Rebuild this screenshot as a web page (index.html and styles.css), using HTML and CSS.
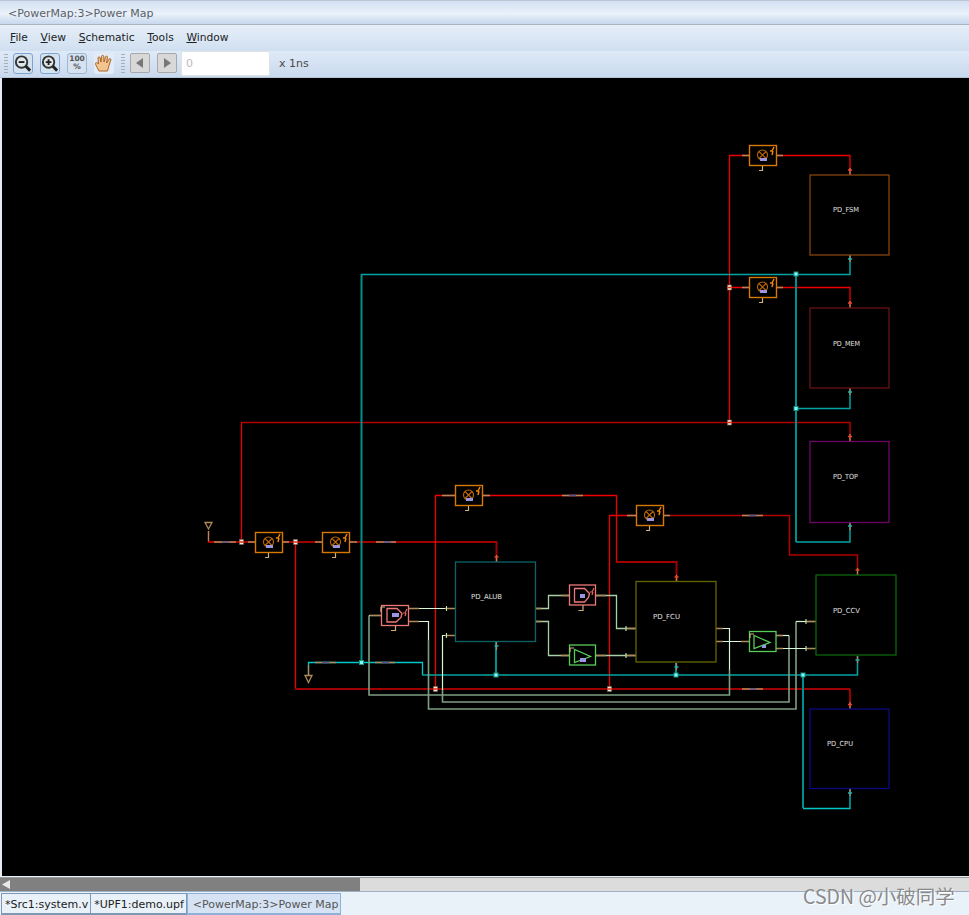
FILE: index.html
```html
<!DOCTYPE html>
<html lang="en">
<head>
<meta charset="utf-8">
<title>Power Map</title>
<link rel="stylesheet" href="styles.css">
</head>
<body>
<div class="app">
  <header class="titlebar">&lt;PowerMap:3&gt;Power Map</header>
  <nav class="menubar">
    <span class="menu"><u>F</u>ile</span>
    <span class="menu"><u>V</u>iew</span>
    <span class="menu"><u>S</u>chematic</span>
    <span class="menu"><u>T</u>ools</span>
    <span class="menu"><u>W</u>indow</span>
  </nav>
  <div class="toolbar">
    <span class="grip"></span>
    <button class="tool tool-on"><svg width="20" height="20" viewBox="0 0 20 20"><circle cx="8.500" cy="8.500" r="6" fill="#dfe8ea" stroke="#333" stroke-width="2"/><path d="M5.500 8.500h6" stroke="#222" stroke-width="2"/><path d="M13 13l4.500 4.500" stroke="#222" stroke-width="3"/></svg></button>
    <button class="tool tool-on"><svg width="20" height="20" viewBox="0 0 20 20"><circle cx="8.500" cy="8.500" r="6" fill="#dfe8ea" stroke="#333" stroke-width="2"/><path d="M5.500 8.500h6M8.500 5.500v6" stroke="#222" stroke-width="2"/><path d="M13 13l4.500 4.500" stroke="#222" stroke-width="3"/></svg></button>
    <button class="tool tool-pct"><span>100</span><span>%</span></button>
    <button class="tool tool-hand"><svg width="20" height="20" viewBox="0 0 20 20"><path d="M5 18C3 14 1.500 12 1.500 10.500S3.500 9.500 4.500 11L4 5c0-1.500 2-1.500 2.200 0L7 9 7.500 3.500c.2-1.500 2.200-1.500 2.300 0L10 9l1.500-5c.4-1.400 2.200-1 2 .4L12.700 10l2.300-3.800c.8-1.200 2.300-.4 1.800.8L15 12.500 13.500 18z" fill="#f3c48e" stroke="#a5662b" stroke-width="1"/></svg></button>
    <span class="grip grip-wide"></span>
    <button class="nav"><svg width="10" height="12" viewBox="0 0 10 12"><path d="M8 1v10L1 6z" fill="#777"/></svg></button>
    <button class="nav"><svg width="10" height="12" viewBox="0 0 10 12"><path d="M2 1v10l7-5z" fill="#777"/></svg></button>
    <input class="timebox" value="0" readonly>
    <span class="unit">x 1ns</span>
  </div>
  <main class="canvas">
    <svg class="schematic" width="967" height="798" viewBox="2 78 967 798">
      <defs>
        <g id="sw">
          <path class="stub" d="M13.500 20v5.500h-3.500"/>
          <rect class="sw-box" x=".5" y=".5" width="27" height="20"/>
          <circle class="sw-ring" cx="13.500" cy="10" r="5"/>
          <path class="sw-ring" d="M10 6.500l7 7M17 6.500l-7 7"/>
          <path class="sw-bolt" d="M25 2l-2 4h-2M24 6l-1 4"/>
          <rect class="tag" x="11" y="13" width="7" height="3"/>
        </g>
      </defs>

      <!-- red supply nets -->
      <path class="w r1" d="M208.500 531V542H216M283 542H289M241.500 542V423"/>
      <path class="w r2" d="M216 542H255M289 542H322M349 542H496.500V562"/>
      <path class="w r3" d="M241 422.500H850V441"/>
      <path class="w r1" d="M295.500 542V689"/>
      <path class="w r2" d="M295 689H850"/>
      <path class="w r1" d="M850 689V709"/>
      <path class="w r1" d="M729.500 422V155.500H749M776 155.500H850V175"/>
      <path class="w r1" d="M729.500 287.500H749M776 287.500H850V308"/>
      <path class="w r1" d="M435.500 689V495.500H455M482 495.500H616.500V562"/>
      <path class="w r2" d="M616 562H676.500V582"/>
      <path class="w r1" d="M609.500 689V515.500H636"/>
      <path class="w r3" d="M663 515.500H789.500V555"/>
      <path class="w r3" d="M789 555H857.500V575"/>

      <!-- cyan ground nets -->
      <path class="w c1" d="M308.500 675V662.500H422.500V675"/>
      <path class="w c3" d="M422 675H857.500V656"/>
      <path class="w c2" d="M361.500 662V274.500"/>
      <path class="w c3" d="M361 274.500H850V255"/>
      <path class="w c2" d="M796 274V542"/>
      <path class="w c3" d="M796 408.500H850V388"/>
      <path class="w c3" d="M796 542H850V523"/>
      <path class="w c2" d="M803 675V808"/>
      <path class="w c1" d="M803 808.500H850V789"/>
      <path class="w c2" d="M496 642V675M676 663V675"/>

      <!-- isolation control nets -->
      <path class="w l1" d="M409 608.500H455"/>
      <path class="w l1" d="M409 621.500H428.500V640"/>
      <path class="w l2" d="M428.500 640V709H796V621.500"/>
      <path class="w l1" d="M796 621.500H816"/>
      <path class="w l1" d="M381 615.500H369"/>
      <path class="w l2" d="M369 615.500V695H729.500V670"/>
      <path class="w l1" d="M729.500 670V628.500H716"/>
      <path class="w l2" d="M442.500 690V702H789V635.500"/>
      <path class="w l1" d="M789 635.500H776"/>
      <path class="w l1" d="M455 635.500H442.500V690"/>
      <path class="w l3" d="M535 608.500H548.500V595.500H569M596 595.500H616.500V628.500H636"/>
      <path class="w l3" d="M535 621.500H548.500V655.500H570M596 655.500H636"/>
      <path class="w l1" d="M716 641.500H749M776 648.500H816"/>

      <!-- tan/blue decoration on nets -->
      <path class="w tan" d="M214 542H236M283 542H289M349 542H357M376 542H396M562 495.500H583M742 515.500H763M742 689H763M315 662.500H336M375 662.500H395"/>
      <path class="w blu" d="M222 542H229M384 542H391M569 495.500H576M749 515.500H756M750 689H756M322 662.500H329M382 662.500H389"/>
      <path class="w tan" d="M208.500 531V541M308.500 665V675M496.500 555V562M496.500 642V650M676.500 575V582M676.500 663V670M850 168V175M850 255V262M850 301V308M850 388V395M850 434V441M850 523V530M857.500 568V575M857.500 656V663M850 702V709M850 789V796"/>
      <path class="w tan" d="M409 608.500H419M445 608.500H455M455 635.500H445M535 608.500H541M535 621.500H541M561 595.500H569M596 595.500H606M625 628.500H636M625 655.500H636M561 655.500H570M596 655.500H606M716 628.500H723M716 641.500H723M741 641.500H749M776 635.500H783M776 648.500H783M806 621.500H816M806 648.500H816M370 615.500H381M409 621.500H419"/>
      <path class="w tan" d="M248 542H255M322 542H315M442 495.500H455M482 495.500H490M627 515.500H636M663 515.500H670M742 155.500H749M776 155.500H783M742 287.500H749M776 287.500H783"/>

      <!-- pin ticks -->
      <path class="w pin-r" d="M494.500 557h4M674.500 577h4M848 170h4M848 303h4M848 436.500h4M855.500 570h4M848 704.500h4"/>
      <path class="w pin-c" d="M494.500 646h4M674.500 667h4M848 259h4M848 392h4M848 526h4M855.500 660h4M848 793h4"/>
      <path class="w pin-l" d="M446.500 606v5M446.500 633v5M626 626v5M626 653v5M806 619v5M806 646v5"/>

      <!-- antenna and ground markers -->
      <path class="mark" d="M205 522.500h7l-3.500 6.500z"/>
      <path class="mark" d="M305 675.500h7l-3.500 7z"/>

      <!-- power domains -->
      <rect class="pd pd-fsm" x="810" y="175" width="79" height="80"/>
      <rect class="pd pd-mem" x="810" y="308" width="79" height="80"/>
      <rect class="pd pd-top" x="810" y="441.500" width="79" height="81"/>
      <rect class="pd pd-alu" x="455.500" y="562" width="80" height="79.500"/>
      <rect class="pd pd-fcu" x="636" y="581.500" width="80" height="80.500"/>
      <rect class="pd pd-ccv" x="816" y="575" width="80" height="80"/>
      <rect class="pd pd-cpu" x="810" y="709" width="79" height="79.500"/>
      <text class="lbl" x="833" y="212" textLength="26" lengthAdjust="spacingAndGlyphs">PD_FSM</text>
      <text class="lbl" x="833" y="346" textLength="27" lengthAdjust="spacingAndGlyphs">PD_MEM</text>
      <text class="lbl" x="833" y="479" textLength="25" lengthAdjust="spacingAndGlyphs">PD_TOP</text>
      <text class="lbl" x="471" y="599" textLength="31" lengthAdjust="spacingAndGlyphs">PD_ALUB</text>
      <text class="lbl" x="653" y="619" textLength="27" lengthAdjust="spacingAndGlyphs">PD_FCU</text>
      <text class="lbl" x="833" y="613" textLength="27" lengthAdjust="spacingAndGlyphs">PD_CCV</text>
      <text class="lbl" x="827" y="746" textLength="26" lengthAdjust="spacingAndGlyphs">PD_CPU</text>

      <!-- power switches -->
      <use href="#sw" x="255" y="532"/>
      <use href="#sw" x="322" y="532"/>
      <use href="#sw" x="455" y="485"/>
      <use href="#sw" x="636" y="505"/>
      <use href="#sw" x="749" y="145"/>
      <use href="#sw" x="749" y="277"/>

      <!-- isolation cells -->
      <path class="stub" d="M395.500 625v5.500h-4.500"/>
      <rect class="iso" x="381.500" y="605.500" width="27" height="20"/>
      <path class="iso" d="M387 608.500h10l5 5-1 4-5 4.500h-9z"/>
      <path class="stub" d="M381 607v5M385 607h-4"/>
      <path class="sw-bolt-iso" d="M407 609l-2 4h-2M406 613l-1 3"/>
      <rect class="tag" x="392" y="613" width="7" height="4"/>
      <path class="stub" d="M583 605v5.500h-4.500"/>
      <rect class="iso" x="569.500" y="585" width="26" height="20"/>
      <path class="iso" d="M574.500 588.500h10l5 5-1 4-4 4.500h-10z"/>
      <path class="sw-bolt-iso" d="M594 588l-2 4h-2M593 592l-1 3"/>
      <rect class="tag" x="580" y="594" width="5" height="4"/>

      <!-- level shifters -->
      <rect class="buf" x="569.500" y="645" width="26" height="20"/>
      <path class="buf" d="M574.500 649.500v13l16-6z"/>
      <path class="stub" d="M570 648h4M570 648v4"/>
      <rect class="tag" x="580" y="658" width="6" height="4"/>
      <rect class="buf" x="749.500" y="631.500" width="26.500" height="20"/>
      <path class="buf" d="M754 635.500v13l16-6z"/>
      <path class="stub" d="M750 634h4M750 634v4"/>
      <rect class="tag" x="762" y="645" width="4" height="3"/>

      <!-- junction dots -->
      <g class="dot-c">
        <rect x="359.500" y="660.500" width="4" height="4"/><rect x="794" y="272" width="4" height="4"/>
        <rect x="794" y="406.500" width="4" height="4"/><rect x="494" y="673" width="4" height="4"/>
        <rect x="674" y="673" width="4" height="4"/><rect x="801" y="673" width="4" height="4"/>
      </g>
      <g class="dot-r">
        <rect x="239.500" y="539.500" width="4" height="5"/><rect x="293.500" y="539.500" width="4" height="5"/>
        <rect x="727.500" y="420" width="4" height="5"/><rect x="727.500" y="285" width="4" height="5"/>
        <rect x="433.500" y="686.500" width="4" height="5"/><rect x="607.500" y="686.500" width="4" height="5"/>
      </g>
      <path class="dot-mid" d="M239.500 542h4M293.500 542h4M727.500 422.500h4M727.500 287.500h4M433.500 689h4M607.500 689h4"/>
    </svg>
  </main>
  <div class="hscroll">
    <span class="scroll-arrow"></span>
    <span class="scroll-thumb"></span>
    <span class="scroll-track"></span>
  </div>
  <footer class="tabs">
    <span class="tab">*Src1:system.v</span>
    <span class="tab">*UPF1:demo.upf</span>
    <span class="tab tab-active">&lt;PowerMap:3&gt;Power Map</span>
  </footer>
  <div class="watermark">CSDN @小破同学</div>
</div>
</body>
</html>
```

FILE: styles.css
```css
* { box-sizing: border-box; }
html, body { margin: 0; padding: 0; background: #e9f1f9; }
.app {
  position: relative;
  width: 969px;
  height: 915px;
  display: flex;
  flex-direction: column;
  overflow: hidden;
  font-family: "DejaVu Sans", sans-serif;
  font-size: 11px;
  color: #333;
}
.titlebar {
  height: 25px;
  flex: none;
  padding: 6px 0 0 8px;
  border-top: 1px solid #bcc6d2;
  border-bottom: 1px solid #aab2bc;
  background: linear-gradient(#d3e0f2, #eaf1fa 55%, #c8d8ee);
  color: #5a5f66;
  font-size: 11px;
  line-height: 13px;
}
.menubar {
  height: 26px;
  flex: none;
  display: flex;
  align-items: center;
  gap: 12.700px;
  padding: 0 0 2px 10px;
  background: linear-gradient(#e6eff9, #d0dff0);
  color: #222;
  font-size: 10.700px;
}
.menu u { text-decoration: underline; }
.toolbar {
  height: 27px;
  flex: none;
  display: flex;
  align-items: center;
  padding: 0 0 2px 4px;
  background: linear-gradient(#dfeaf7, #c9d9ee);
  border-bottom: 1px solid #b5c3d4;
}
.grip {
  width: 4px;
  height: 19px;
  margin-right: 5px;
  background: repeating-linear-gradient(#a6adb5 0 1px, transparent 1px 3px);
}
.grip-wide { margin-right: 5px; }
.tool {
  width: 20px;
  height: 21px;
  margin: 0 7px 0 0;
  padding: 0;
  display: flex;
  flex-direction: column;
  align-items: center;
  justify-content: center;
  border: 1px solid #9fb7d2;
  border-radius: 3px;
  background: #d5e2f0;
}
.tool-on { border-color: #7ea5cf; }
.tool-pct { font: bold 7.500px/8px "DejaVu Sans", sans-serif; color: #555; }
.tool-hand { border: 0; background: #e3ecf6; }
.nav {
  width: 20px;
  height: 20px;
  margin: 0 7px 0 0;
  padding: 0;
  display: flex;
  align-items: center;
  justify-content: center;
  border: 1px solid #a8a8a8;
  border-radius: 2px;
  background: #d8d8d8;
}
.timebox {
  width: 89px;
  height: 25px;
  margin-left: -3px;
  padding: 0 4px;
  border: 1px solid #dfe3e8;
  border-radius: 2px;
  background: #fff;
  color: #bbb;
  font: 11px "DejaVu Sans", sans-serif;
}
.unit { margin-left: 9px; font-size: 11px; color: #4a4a4a; }
.canvas {
  height: 798px;
  flex: none;
  padding-left: 2px;
  background: #e4ebf3;
}
.schematic { display: block; background: #000; }

.w { fill: none; }
.r1 { stroke: #ee0000; stroke-width: 1.300; }
.r2 { stroke: #a00000; stroke-width: 2; }
.r3 { stroke: #b40000; stroke-width: 1.500; }
.c1 { stroke: #00c8c8; stroke-width: 1.300; }
.c2 { stroke: #008f8f; stroke-width: 2; }
.c3 { stroke: #00a4a4; stroke-width: 1.500; }
.l1 { stroke: #d8f6d8; stroke-width: 1.200; }
.l2 { stroke: #7f9f82; stroke-width: 1.600; }
.l3 { stroke: #a8d0a8; stroke-width: 1.300; }
.tan { stroke: #b08a5c; stroke-width: 1.300; }
.blu { stroke: #55558f; stroke-width: 1.300; }
.pin-r { stroke: #f04020; stroke-width: 1.300; }
.pin-c { stroke: #20b0b8; stroke-width: 1.300; }
.pin-l { stroke: #c0e8b8; stroke-width: 1.100; }
.mark { fill: none; stroke: #b08a5c; stroke-width: 1.300; }

.pd { fill: #000; stroke-width: 1.300; }
.pd-fsm { stroke: #84440a; }
.pd-mem { stroke: #681212; }
.pd-top { stroke: #6e0668; }
.pd-alu { stroke: #0c6468; }
.pd-fcu { stroke: #666600; }
.pd-ccv { stroke: #0a680a; }
.pd-cpu { stroke: #0a0a80; }
.lbl {
  fill: #e0e0e0;
  font: 7px "DejaVu Sans", sans-serif;
}
.sw-box { fill: #000; stroke: #d87800; stroke-width: 1.400; }
.sw-ring { fill: none; stroke: #c06800; stroke-width: 1.100; }
.sw-bolt { fill: none; stroke: #f08400; stroke-width: 1.500; }
.sw-bolt-iso { fill: none; stroke: #f06060; stroke-width: 1.200; }
.stub { fill: none; stroke: #d0b080; stroke-width: 1.200; }
.tag { fill: #9a96e0; }
.iso { fill: none; stroke: #ee7878; stroke-width: 1.300; }
.buf { fill: none; stroke: #58cc58; stroke-width: 1.300; }
.dot-c { fill: #7ffff0; stroke: #1f8f88; stroke-width: 1; }
.dot-r { fill: #f4ecd8; stroke: #806050; stroke-width: .6; }
.dot-mid { fill: none; stroke: #d83018; stroke-width: 1.400; }

.hscroll {
  height: 14px;
  flex: none;
  margin-top: 1px;
  display: flex;
  border-top: 1px solid #9a9a9a;
  background: #dcdcdc;
}
.scroll-arrow {
  width: 11px;
  padding: 2px 1px 2px 2px;
  background: #808080;
}
.scroll-arrow::before {
  content: "";
  display: block;
  height: 100%;
  background: #e8e8e8;
  clip-path: polygon(100% 0, 100% 100%, 0 50%);
}
.scroll-thumb { width: 349px; background: #808080; }
.scroll-track { flex: 1; background: #dcdcdc; }
.tabs {
  height: 24px;
  flex: none;
  display: flex;
  align-items: stretch;
  padding: 1px 0 0 1px;
  background: #e9f1f9;
  border-top: 1px solid #9db0c4;
  font-size: 11px;
}
.tab {
  display: flex;
  align-items: center;
  padding: 1px 2px 0 3px;
  border: 1px solid #7f98b3;
  border-bottom-width: 2px;
  color: #222;
  line-height: 1;
  margin-right: -1px;
}
.tab-active {
  margin: 0 0 0 1px;
  padding: 1px 2px 0 5px;
  background: #d5e3f4;
  color: #555;
  border-color: #8fb0d8;
}
.watermark {
  position: absolute;
  left: 803px;
  top: 881px;
  color: #8a8a8a;
  font: 19.500px "Noto Sans CJK SC", "Noto Sans", sans-serif;
  text-shadow: 1px 1px 0 #fff;
  white-space: nowrap;
}
```
